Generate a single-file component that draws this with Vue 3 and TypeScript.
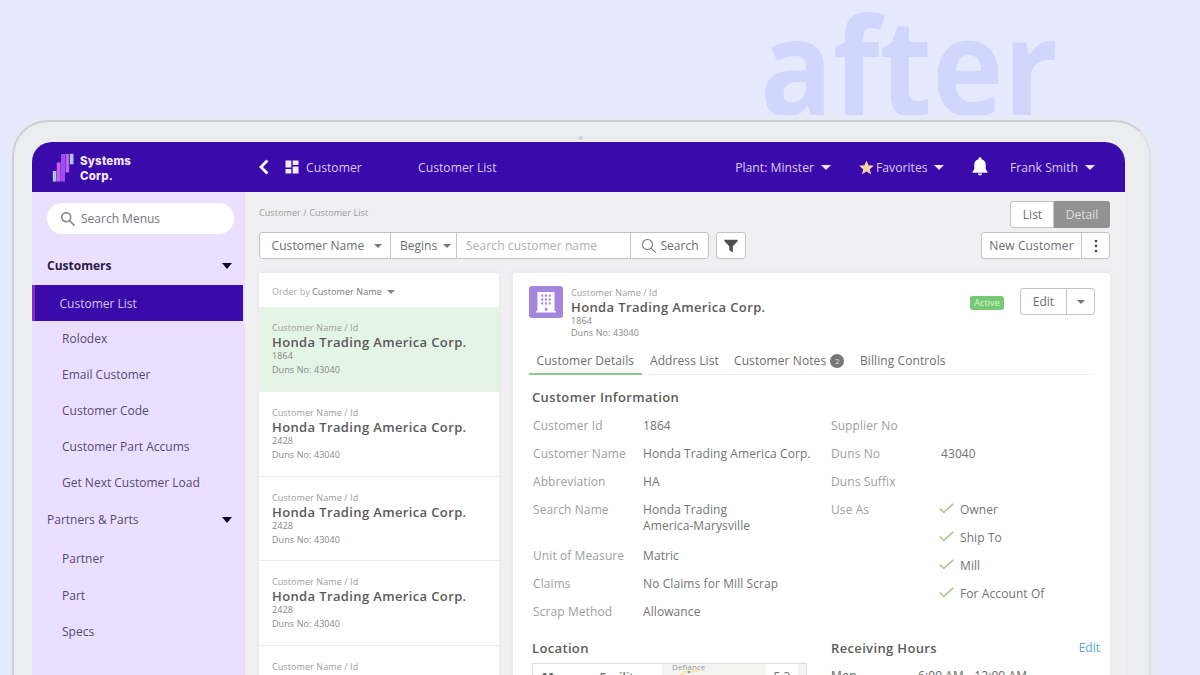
<script setup lang="ts">
const primaryItems: string[] = ['Rolodex', 'Email Customer', 'Customer Code', 'Customer Part Accums', 'Get Next Customer Load']
const partnerItems: string[] = ['Partner', 'Part', 'Specs']

interface Customer { name: string; id: string; duns: string; active?: boolean }
const name = 'Honda Trading America Corp.'
const customers: Customer[] = [
  { name, id: '1864', duns: '43040', active: true },
  { name, id: '2428', duns: '43040' },
  { name, id: '2428', duns: '43040' },
  { name, id: '2428', duns: '43040' },
  { name, id: '2428', duns: '43040' },
]

interface Field { label: string; value: string; tall?: boolean }
const leftFields: Field[] = [
  { label: 'Customer Id', value: '1864' },
  { label: 'Customer Name', value: name },
  { label: 'Abbreviation', value: 'HA' },
  { label: 'Search Name', value: 'Honda Trading\nAmerica-Marysville', tall: true },
  { label: 'Unit of Measure', value: 'Matric' },
  { label: 'Claims', value: 'No Claims for Mill Scrap' },
  { label: 'Scrap Method', value: 'Allowance' },
]
const rightFields: Field[] = [
  { label: 'Supplier No', value: '' },
  { label: 'Duns No', value: '43040' },
  { label: 'Duns Suffix', value: '' },
]
const uses: string[] = ['Owner', 'Ship To', 'Mill', 'For Account Of']
</script>

<template>
  <div class="stage">
    <div class="word">after</div>
    <div class="tablet">
      <i class="camera"></i>
      <div class="app">
        <header class="topbar">
          <div class="brand">
            <svg class="logo" width="24" height="30" viewBox="0 0 24 30">
              <rect x="0.8" y="18" width="3.6" height="10.6" fill="#a9c6ee" />
              <rect x="4.8" y="9.5" width="3.8" height="19" fill="#c95fe6" />
              <rect x="9" y="1" width="4" height="27.5" fill="#a04df0" />
              <rect x="13.5" y="1" width="3.7" height="18.5" fill="#b963ea" />
              <rect x="17.9" y="0.8" width="3.6" height="10.5" fill="#a9c6ee" />
            </svg>
            <div class="brand-name">Systems<br />Corp.</div>
          </div>
          <svg class="back" width="12" height="16" viewBox="0 0 12 16"><path d="M9.4 1.6 3 8l6.400 6.400" fill="none" stroke="#fff" stroke-width="2.800" /></svg>
          <svg class="dash" width="14" height="14" viewBox="0 0 14 14" fill="#f3eaff"><path d="M.5.5h5.800v7H.5zM.5 9h5.800v4.500H.5zM7.700.5h5.800V5H7.700zM7.700 6.500h5.800v7H7.700z" /></svg>
          <span class="t-cust">Customer</span>
          <span class="t-list">Customer List</span>
          <div class="top-right">
            <span class="t-plant">Plant: Minster</span><i class="caret white"></i>
            <svg class="star" width="15" height="15" viewBox="0 0 24 24"><path d="m12 .8 3.300 7.700 8.300.7-6.300 5.500 1.900 8.200L12 18.500l-7.200 4.400 1.900-8.200L.4 9.200l8.300-.7z" fill="#fbd3a2" /></svg>
            <span class="t-fav">Favorites</span><i class="caret white"></i>
            <svg class="bell" width="16" height="19" viewBox="0 0 16 19"><path d="M8 .2c-.9 0-1.500.6-1.500 1.400v.6C3.800 2.800 2.300 5 2.300 7.600v4.600L.6 14.600v1.200h14.800v-1.200l-1.700-2.400V7.600c0-2.600-1.500-4.800-4.200-5.400v-.6C9.500.8 8.900.2 8 .2zM6 16.600a2 2 0 0 0 4 0z" fill="#fff" /></svg>
            <span class="t-user">Frank Smith</span><i class="caret white"></i>
          </div>
        </header>

        <div class="body">
          <nav class="side">
            <div class="menu-search">
              <svg width="16" height="16" viewBox="0 0 16 16" fill="none" stroke="#8b8b8f" stroke-width="1.700"><circle cx="6.200" cy="6.200" r="4.500" /><path d="m9.600 9.600 5 5" /></svg>
              <span>Search Menus</span>
            </div>
            <div class="group strong"><span>Customers</span><i class="caret dark"></i></div>
            <div class="item current">Customer List</div>
            <div v-for="item in primaryItems" :key="item" class="item">{{ item }}</div>
            <div class="group second"><span>Partners &amp; Parts</span><i class="caret dark"></i></div>
            <div v-for="item in partnerItems" :key="item" class="item partner">{{ item }}</div>
          </nav>

          <main class="main">
            <div class="crumb-row">
              <span class="crumb">Customer / Customer List</span>
              <div class="btns toggle"><span class="b-list">List</span><span class="b-detail">Detail</span></div>
            </div>
            <div class="tools">
              <div class="btns">
                <span class="f-field">Customer Name<i class="caret small"></i></span>
                <span class="f-op">Begins<i class="caret small"></i></span>
                <span class="f-input">Search customer name</span>
                <span class="f-go"><svg width="16" height="16" viewBox="0 0 16 16" fill="none" stroke="#777" stroke-width="1.100"><circle cx="6.500" cy="6.500" r="5" /><path d="m10.200 10.200 4.500 4.500" /></svg>Search</span>
              </div>
              <div class="btns filter"><span><svg width="14" height="14" viewBox="0 0 14 14"><path d="M.4.700h13.200v1.500L8.800 7.300v6.200L5.300 11.300v-4L.4 2.200z" fill="#4d4d4d" /></svg></span></div>
              <div class="btns new"><span class="b-new">New Customer</span><span class="b-more"><svg width="4" height="14" viewBox="0 0 4 14" fill="#444"><circle cx="2" cy="2" r="1.300" /><circle cx="2" cy="7" r="1.300" /><circle cx="2" cy="12" r="1.300" /></svg></span></div>
            </div>

            <div class="cards">
              <section class="list">
                <div class="order"><span>Order by</span> <b>Customer Name</b><i class="caret tiny"></i></div>
                <article v-for="(c, i) in customers" :key="i" class="row" :class="{ picked: c.active }">
                  <div class="cap">Customer Name / Id</div>
                  <div class="name">{{ c.name }}</div>
                  <div class="num">{{ c.id }}</div>
                  <div class="num duns">Duns No: {{ c.duns }}</div>
                </article>
              </section>

              <section class="detail">
                <div class="head">
                  <div class="tile"><svg width="22" height="22" viewBox="0 0 22 22"><path d="M2.500 1h17v19H21v1.500H1V20h1.500z" fill="#fff" /><g fill="#a586de"><rect v-for="n in 9" :key="n" :x="6.300 + ((n - 1) % 3) * 3.700" :y="3.500 + Math.floor((n - 1) / 3) * 3.900" width="2" height="2.200" /><rect x="9.800" y="16.800" width="2.600" height="2.800" /></g></svg></div>
                  <div class="who">
                    <div class="cap">Customer Name / Id</div>
                    <div class="name">Honda Trading America Corp.</div>
                    <div class="num">1864</div>
                    <div class="num">Duns No: 43040</div>
                  </div>
                  <span class="status">Active</span>
                  <div class="btns"><span class="b-edit">Edit</span><span class="b-drop"><i class="caret small"></i></span></div>
                </div>
                <div class="tabs">
                  <span class="tab on">Customer Details</span>
                  <span class="tab t2">Address List</span>
                  <span class="tab t3">Customer Notes<em>2</em></span>
                  <span class="tab t4">Billing Controls</span>
                </div>
                <h2>Customer Information</h2>
                <div class="info">
                  <dl>
                    <div v-for="f in leftFields" :key="f.label" class="field" :class="{ tall: f.tall }"><dt>{{ f.label }}</dt><dd>{{ f.value }}</dd></div>
                  </dl>
                  <dl>
                    <div v-for="f in rightFields" :key="f.label" class="field"><dt>{{ f.label }}</dt><dd>{{ f.value }}</dd></div>
                    <div class="field"><dt>Use As</dt>
                      <dd class="uses"><div v-for="u in uses" :key="u"><svg width="15" height="11" viewBox="0 0 15 11"><path d="m.8 5.600 4 3.900L14.200.8" fill="none" stroke="#a9c987" stroke-width="1.600" /></svg>{{ u }}</div></dd>
                    </div>
                  </dl>
                </div>
                <div class="lower">
                  <div class="location">
                    <h2>Location</h2>
                    <div class="map">
                      <div class="place"><b>Maum</b><span>Facility</span></div>
                      <div class="land"><span>Defiance</span><svg width="24" height="10" viewBox="0 0 24 10"><path d="M0 9 9 2l14-1" fill="none" stroke="#f3e6ad" stroke-width="2" /><circle cx="13" cy="2" r="1.200" fill="#999" /></svg></div>
                      <div class="expand">5.3</div>
                    </div>
                  </div>
                  <div class="hours">
                    <h2>Receiving Hours<a>Edit</a></h2>
                    <div class="day"><span>Mon</span><span>6:00 AM - 12:00 AM</span></div>
                  </div>
                </div>
              </section>
            </div>
          </main>
        </div>
      </div>
    </div>
  </div>
</template>

<style>
body { margin: 0; overflow: hidden; }
</style>

<style scoped>
* { box-sizing: border-box; }
.stage { position: relative; width: 1200px; height: 675px; overflow: hidden; background: #e5eaff; font-family: "Open Sans", "Noto Sans", sans-serif; font-size: 12px; color: #555; white-space: nowrap; padding: 120px 0 0 12px; }
.word { position: absolute; left: 760px; top: -28px; font: 700 134px/184px "Open Sans", sans-serif; font-variant-ligatures: none; letter-spacing: 0; color: #d0d6fe; transform: scaleX(.9); transform-origin: 0 0; }
.tablet { position: relative; width: 1139px; height: 640px; border: 2px solid #ccd0d3; border-right-color: #dfe0e5; border-radius: 36px 36px 0 0; background: #ebedee; padding: 20px 23px 0 18px; box-shadow: 0 0 0 5px #e7eaf7; }
.camera { position: absolute; left: 564px; top: 14px; width: 5px; height: 4px; border-radius: 50%; background: #d2d5d5; }
.app { width: 1093px; height: 560px; border-radius: 20px 20px 0 0; overflow: hidden; }
.topbar { height: 50px; background: #3a0aaa; display: flex; align-items: center; color: #d9ccf5; font-size: 12.200px; }
.brand { display: flex; width: 225px; flex: none; padding-left: 20px; }
.logo { flex: none; margin-top: 2px; }
.brand-name { margin-left: 4px; font: 800 11.5px/15px Inter, sans-serif; color: #f1e9ff; padding-top: 3px; letter-spacing: .2px; }
.back { flex: none; margin-left: 1px; }
.dash { flex: none; margin-left: 15px; }
.t-cust { margin-left: 7px; width: 112px; flex: none; }
.top-right { margin-left: auto; padding-right: 30.500px; display: flex; align-items: center; }
.caret { display: inline-block; flex: none; width: 0; height: 0; border: 5px solid transparent; border-bottom: 0; border-top: 5.500px solid #555; }
.white { border-top-color: #eee7fb; margin-left: 6.500px; }
.dark { border-top-color: #15052e; border-top-width: 6px; }
.small { border-width: 4.500px 4.500px 0; border-top-color: #777; }
.tiny { border-width: 4px 4px 0; border-top-color: #888; margin-left: 3px; }
.star { margin: 0 2px 0 28.500px; }
.bell { margin: 0 22px 2px 28px; }
.body { display: flex; height: 510px; }
.side { width: 213px; flex: none; background: #ebdfff; padding-top: 11px; color: #564a74; font-size: 12px; }
.menu-search { margin-left: 15px; width: 187px; height: 31px; border-radius: 16px; background: #fff; display: flex; align-items: center; padding-left: 13px; gap: 5px; color: #77747c; }
.group { display: flex; justify-content: space-between; align-items: center; height: 37px; padding: 0 13px 0 15px; }
.strong { height: 50px; padding-top: 13px; margin-bottom: 1px; font-weight: 700; color: #2a1a4a; }
.item { height: 36.050px; display: flex; align-items: center; padding-left: 30px; }
.current { height: 36px; width: 211px; padding-left: 24.500px; border-left: 3px solid #8a2bc9; background: #3a0aaa; color: #d5c6f3; margin-bottom: -.300px; }
.second { margin: .3px 0 2px; }
.partner { height: 36.600px; }
.main { flex: 1; min-width: 0; background: #f0f0f2; padding: 9px 15px 0 14px; color: #6e6e6e; letter-spacing: .09px; }
.crumb-row { display: flex; justify-content: space-between; height: 31px; }
.crumb { font-size: 9px; line-height: 23px; color: #9a9a9c; }
.btns { display: flex; height: 27px; border: 1px solid #c4c4c6; border-radius: 3px; background: #fff; font-size: 12px; letter-spacing: 0; flex: none; }
.btns > span { display: flex; align-items: center; justify-content: center; }
.btns > span + span { border-left: 1px solid #c4c4c6; }
.toggle { width: 100px; }
.b-list { width: 43px; }
.b-detail { flex: 1; background: #929292; color: #ddd; margin: -1px; border-radius: 0 3px 3px 0; }
.tools { display: flex; height: 41px; }
.btns .f-field { width: 130px; justify-content: space-between; padding: 0 8px 0 11.500px; letter-spacing: .1px; }
.btns .f-op { width: 66px; justify-content: space-between; padding: 0 5px 0 9px; }
.btns .f-input { width: 174px; justify-content: flex-start; padding-left: 9px; color: #b0b0b0; letter-spacing: .1px; }
.f-go { width: 78px; gap: 4px; }
.filter { margin-left: 7px; width: 30px; justify-content: center; }
.new { margin-left: auto; letter-spacing: .1px; }
.b-new { width: 99px; }
.b-more { width: 28px; }
.cards { display: flex; gap: 14px; height: 440px; }
.list, .detail { background: #fff; border-radius: 3px 3px 0 0; box-shadow: 0 0 4px #e4e4e6; }
.list { width: 240px; flex: none; }
.order { height: 34.400px; display: flex; align-items: center; padding-left: 13px; font-size: 9px; color: #aaa; gap: 2px; padding-top: 3px; }
.order b { font-weight: 400; color: #777; }
.row { height: 84.700px; padding: 14px 0 0 13px; border-bottom: 1px solid #ececec; }
.picked { background: #e4f4e5; border-color: #e4f4e5; }
.cap { font-size: 9px; line-height: 13px; color: #9c9c9c; }
.name { font-size: 13px; font-weight: 600; line-height: 16px; color: #5a5a5a; letter-spacing: .37px; }
.num { font-size: 9px; line-height: 12px; color: #888; }
.duns { margin-top: 2px; }
.detail { flex: 1; min-width: 0; padding: 13px 15px 0 16px; }
.head { display: flex; height: 62px; }
.tile { width: 34px; height: 32px; border-radius: 3px; background: #a586de; display: flex; align-items: center; justify-content: center; flex: none; }
.who { margin-left: 8px; width: 399px; flex: none; }
.status { height: 14px; width: 34px; border-radius: 3px; background: #76c974; color: #d8f5d3; font-size: 9px; line-height: 14px; text-align: center; margin: 10px 16px 0 0; flex: none; }
.head .btns { margin-top: 2px; flex: none; }
.b-edit { width: 45px; }
.b-drop { width: 28px; }
.tabs { display: flex; height: 27px; border-bottom: 1px solid #f0f0f0; line-height: 25px; }
.tab { white-space: nowrap; flex: none; }
.on { width: 113px; padding-left: 7.500px; border-bottom: 2px solid #8cc98a; height: 27px; }
.t2 { margin-left: 8px; width: 84px; }
.t3 { width: 126px; display: flex; align-items: center; height: 25px; }
em { font-style: normal; width: 14px; height: 14px; border-radius: 50%; background: #777; color: #ddd; font-size: 8px; line-height: 14px; text-align: center; margin-left: 4px; }
h2 { margin: 0; font-size: 13px; font-weight: 600; line-height: 20px; color: #5c5c5c; letter-spacing: .35px; }
.detail > h2 { margin: 12px 0 5px 3px; }
.info { display: flex; padding: 0 0 0 4px; height: 226px; }
dl { margin: 0; width: 298px; flex: none; }
.info dl + dl { width: 260px; }
.field { display: flex; height: 28px; line-height: 28px; }
.tall { height: 46px; }
dt { width: 110px; color: #a0a0a0; flex: none; }
dd { margin: 0; color: #747474; }
.tall dd { white-space: pre; line-height: 15.500px; padding-top: 6px; }
.uses div { height: 28px; }
.uses svg { margin: 0 6px 0 -2px; }
.lower { display: flex; padding-left: 3px; }
.location { width: 299px; flex: none; }
.map { width: 275px; height: 60px; margin-top: 5px; border: 1px solid #ddd; display: flex; background: #f3f3f2; }
.place { width: 129px; background: #fff; padding-left: 9px; font-size: 12px; font-weight: 600; line-height: 27px; display: flex; gap: 18px; }
.land { width: 104px; padding-left: 10px; font-size: 8px; line-height: 6px; color: #999; }
.land svg { display: block; margin-left: 4px; }
.expand { width: 32px; background: #fff; text-align: center; line-height: 25px; }
.hours h2 { width: 269px; display: flex; justify-content: space-between; }
.hours a { font-size: 12px; font-weight: 400; color: #55a4dd; letter-spacing: 0; }
.day { display: flex; margin-top: 8px; line-height: 20px; color: #666; }
.day span:first-child { width: 87px; }
</style>
